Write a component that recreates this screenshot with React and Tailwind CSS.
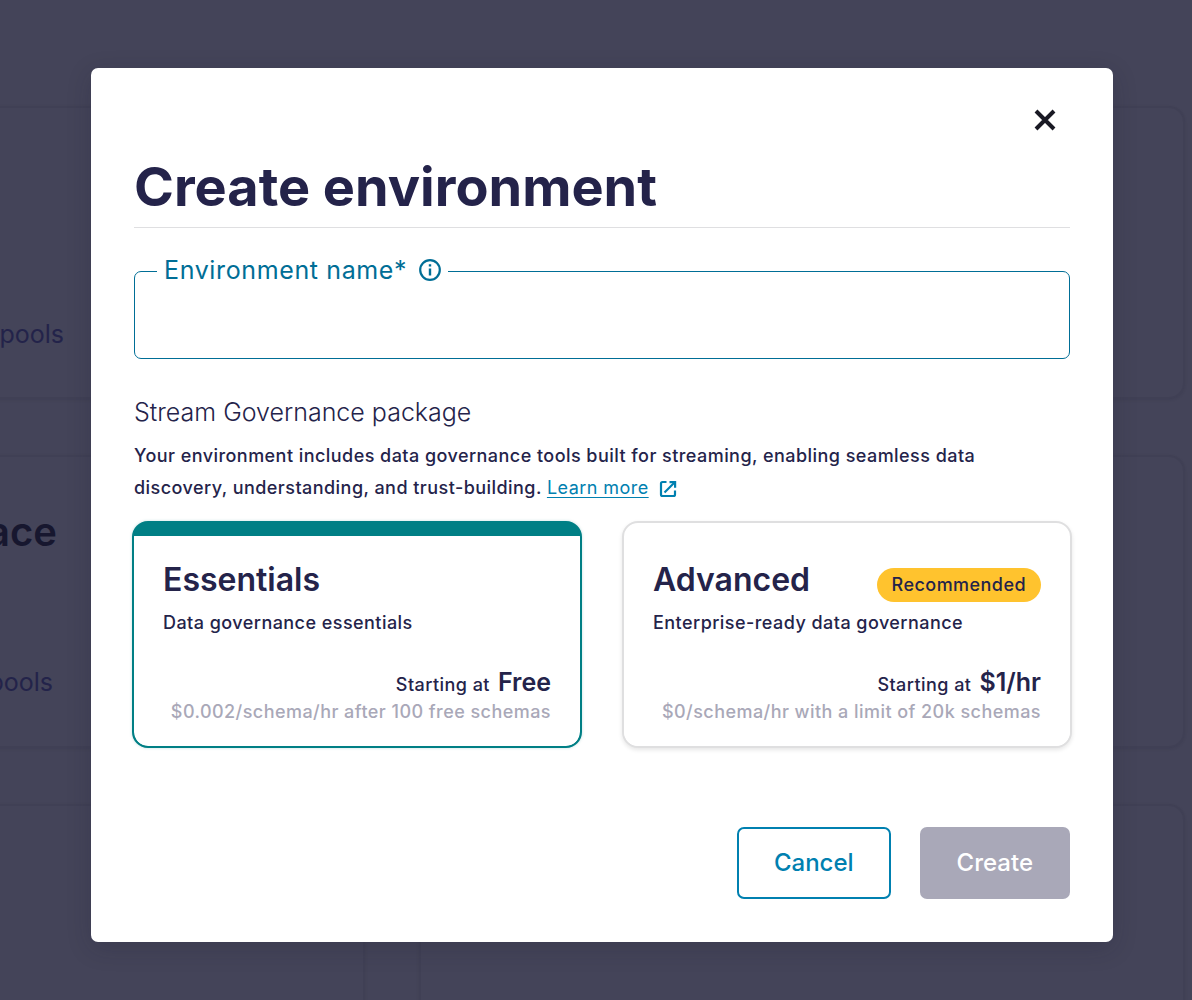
import { useState } from "react";

function BackgroundCard({ children }) {
  return (
    <div className="h-[293px] shrink-0 rounded-2xl border-2 border-[#404055] shadow-[0_1px_3px_rgba(30,30,50,0.1)]">
      {children}
    </div>
  );
}

function Background() {
  return (
    <div aria-hidden="true" className="absolute inset-0 overflow-hidden bg-[#444459]">
      <div className="grid grid-cols-[765px_766px] justify-end gap-x-[54px] gap-y-14 pt-[106px] pr-[7px]">
        <BackgroundCard>
          <div className="pt-[210px] pr-[299px] text-right text-[25px] leading-8 text-[#23234a]">pools</div>
        </BackgroundCard>
        <BackgroundCard />
        <BackgroundCard>
          <div className="pt-[51px] pr-[306px] text-right text-[40px] leading-12 font-semibold text-[#17172f]">ace</div>
          <div className="pt-[110px] pr-[310px] text-right text-[25px] leading-8 text-[#23234a]">pools</div>
        </BackgroundCard>
        <BackgroundCard />
        <BackgroundCard />
        <BackgroundCard />
      </div>
    </div>
  );
}

function InfoIcon() {
  return (
    <svg viewBox="0 0 22 22" className="size-[22px]" fill="none" aria-hidden="true">
      <circle cx="11" cy="11" r="9.8" stroke="currentColor" strokeWidth="2.2" />
      <path d="M11 9.5v7M11 5.2v2.4" stroke="currentColor" strokeWidth="2.4" />
    </svg>
  );
}

function ExternalIcon() {
  return (
    <svg viewBox="0 0 18 18" className="ml-2.5 inline-block size-[18px] align-[-4px]" fill="none" aria-hidden="true">
      <path d="M7.5 2H3.5A1.5 1.5 0 0 0 2 3.5v11A1.5 1.5 0 0 0 3.5 16h11a1.5 1.5 0 0 0 1.5-1.5v-4" stroke="currentColor" strokeWidth="2.2" />
      <path d="M5.5 12.5 15.5 2.5" stroke="currentColor" strokeWidth="2.2" />
      <path d="M10.5 1H17.2v6.7H15V3.2h-4.5z" fill="currentColor" />
    </svg>
  );
}

function PackageCard({ name, title, badge, description, price, note, selected, onSelect }) {
  return (
    <label
      className={
        "relative flex cursor-pointer flex-col overflow-hidden rounded-2xl border-2 " +
        (selected
          ? "border-[#007f85] bg-[#007f85] shadow-[0_0_3px_rgba(0,127,133,0.25)]"
          : "border-[#dfdfe0] bg-white shadow-[0_2px_4px_rgba(0,0,0,0.1)]")
      }
    >
      <input type="radio" name="package" value={name} checked={selected} onChange={onSelect} className="sr-only" />
      <span className="h-[13px]" />
      <span className="flex flex-col rounded-b-[14px] bg-white px-[29px] pt-6 pb-[22px]">
        <span className="flex items-start justify-between">
          <span className="text-[32px] leading-10 font-semibold">{title}</span>
          {badge && (
            <span className="mt-2 -mb-2 rounded-full bg-[#ffc32e] px-[15px] text-lg leading-[34px] font-medium tracking-wide">
              {badge}
            </span>
          )}
        </span>
        <span className="mt-[11px] text-lg leading-6 font-medium tracking-wide">{description}</span>
        <span className="mt-[31px] flex items-baseline justify-end gap-2">
          <span className="text-lg leading-6 font-medium tracking-wide">Starting at</span>
          <strong className="text-[25px] leading-8 font-semibold">{price}</strong>
        </span>
        <span className="mt-0.5 text-right text-lg leading-6 font-medium tracking-wide text-[#a9a8b8]">{note}</span>
      </span>
    </label>
  );
}

export default function App() {
  const [name, setName] = useState("");
  const [plan, setPlan] = useState("essentials");
  return (
    <div className="relative min-h-screen font-['Inter',sans-serif] text-[#24234a]">
      <Background />
      <div className="relative pt-[68px] pr-[79px] pb-[58px] pl-[91px]">
        <form
          role="dialog"
          aria-labelledby="dialog-title"
          className="flex flex-col rounded-[7px] bg-white px-[43px] pt-[27px] pb-[43px] shadow-[0_6px_24px_rgba(25,25,45,0.2)]"
        >
          <button type="button" aria-label="Close" className="flex size-[50px] items-center justify-center self-end text-[#191924]">
            <svg viewBox="0 0 22 22" className="size-[22px]" aria-hidden="true">
              <path d="M2 2l18 18M20 2L2 20" stroke="currentColor" strokeWidth="4" />
            </svg>
          </button>
          <h1 id="dialog-title" className="mt-2.5 border-b border-[#dfdfe1] pb-2 text-[54px] leading-16 font-bold">
            Create environment
          </h1>
          <fieldset className="mt-[27px] rounded-[7px] border border-[#006e96]">
            <legend className="ml-[22px] flex h-8 items-center gap-3 px-[7px] pb-0.5 text-[#006e96]">
              <label htmlFor="env-name" className="text-[25px] leading-8 tracking-wide">Environment name*</label>
              <InfoIcon />
            </legend>
            <input
              id="env-name"
              type="text"
              value={name}
              onChange={(e) => setName(e.target.value)}
              className="block h-[71px] w-full rounded-[7px] px-7 text-2xl outline-none"
            />
          </fieldset>
          <h2 className="mt-[37px] text-[25px] leading-8 font-light">Stream Governance package</h2>
          <p className="mt-3 text-lg leading-8 font-medium tracking-wide">
            Your environment includes data governance tools built for streaming, enabling seamless data
            <br />
            discovery, understanding, and trust-building.{" "}
            <a href="#learn" className="text-[#0080b0]">
              <span className="font-normal underline underline-offset-3">Learn more</span>
              <ExternalIcon />
            </a>
          </p>
          <div className="-mx-0.5 mt-[17px] grid grid-cols-2 gap-10">
            <PackageCard
              name="essentials"
              title="Essentials"
              description="Data governance essentials"
              price="Free"
              note="$0.002/schema/hr after 100 free schemas"
              selected={plan === "essentials"}
              onSelect={() => setPlan("essentials")}
            />
            <PackageCard
              name="advanced"
              title="Advanced"
              badge="Recommended"
              description="Enterprise-ready data governance"
              price="$1/hr"
              note="$0/schema/hr with a limit of 20k schemas"
              selected={plan === "advanced"}
              onSelect={() => setPlan("advanced")}
            />
          </div>
          <div className="mt-[79px] flex justify-end gap-[29px] text-2xl font-medium">
            <button type="button" className="h-[72px] rounded-[7px] border-2 border-[#0080b0] px-[35px] text-[#0080b0]">
              Cancel
            </button>
            <button type="submit" disabled className="h-[72px] rounded-[7px] bg-[#a9a8b8] px-[37px] text-white">
              Create
            </button>
          </div>
        </form>
      </div>
    </div>
  );
}
